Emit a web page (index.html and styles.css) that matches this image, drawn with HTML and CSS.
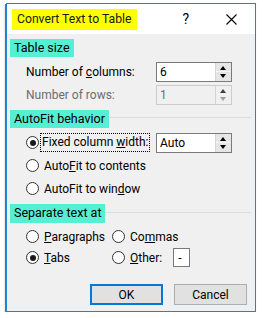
FILE: index.html
```html
<!DOCTYPE html>
<html>
<head>
<meta charset="utf-8">
<link rel="stylesheet" href="styles.css">
</head>
<body>
<div class="window">
  <div class="titlebar">
    <span class="title">Convert Text to Table</span>
    <span class="help">?</span>
    <span class="close"><svg width="11" height="11" viewBox="0 0 11 11"><path d="M0.5 0.5 L10.5 10.5 M10.5 0.5 L0.5 10.5" stroke="#000" stroke-width="1.1" fill="none"/></svg></span>
  </div>
  <div class="body">
    <div class="group-head first"><span class="hl">Table size</span></div>
    <div class="row field">
      <span class="label">Number of <u>c</u>olumns:</span>
      <div class="spin"><span class="val">6</span><span class="arrows"><span class="up"></span><span class="down"></span></span></div>
    </div>
    <div class="row field disabled">
      <span class="label">Number of rows:</span>
      <div class="spin"><span class="val">1</span><span class="arrows"><span class="up"></span><span class="down"></span></span></div>
    </div>

    <div class="group-head"><span class="hl">AutoFit behavior</span><span class="line"></span></div>
    <div class="row field">
      <span class="opt focus"><span class="radio on"></span><span class="focus-box">Fixed column <u>w</u>idth:</span></span>
      <div class="spin"><span class="val">Auto</span><span class="arrows"><span class="up"></span><span class="down"></span></span></div>
    </div>
    <div class="row"><span class="opt"><span class="radio"></span><span>Auto<u>F</u>it to contents</span></span></div>
    <div class="row"><span class="opt"><span class="radio"></span><span>AutoFit to win<u>d</u>ow</span></span></div>

    <div class="group-head sep"><span class="hl">Separate text at</span><span class="line"></span></div>
    <div class="grid2">
      <span class="opt"><span class="radio"></span><span><u>P</u>aragraphs</span></span>
      <span class="opt"><span class="radio"></span><span>Co<u>m</u>mas</span></span>
      <span class="opt"><span class="radio on"></span><span><u>T</u>abs</span></span>
      <span class="opt"><span class="radio"></span><span class="other-label"><u>O</u>ther:</span><span class="small-input">-</span></span>
    </div>

    <div class="buttons">
      <span class="btn default">OK</span>
      <span class="btn">Cancel</span>
    </div>
  </div>
</div>
</body>
</html>
```
FILE: styles.css
```css
html, body { margin: 0; padding: 0; background: #fff; }
body {
  font-family: Roboto, "Noto Sans", "Liberation Sans", sans-serif;
  font-size: 12px;
  color: #000;
}
.window {
  margin: 3px 0 0 6px;
  width: 248px;
  border: 1px solid #1b84d8;
  box-shadow: -1px 1px 0 #6f6f6f, -1px 2px 2px rgba(0,0,0,0.25);
  background: #f0f0f0;
}
.titlebar {
  height: 30px;
  background: #fff;
  display: flex;
  align-items: center;
}
.title {
  margin-left: 5px;
  background: #ffff00;
  padding: 3px 6px 3px 5px;
  line-height: 15px;
  font-size: 12.2px;
  color: #1a1a1a;
}
.help {
  margin-left: auto;
  margin-right: 37px;
  font-size: 14px;
}
.close {
  margin-right: 18px;
  display: flex;
  margin-top: 1px;
}
.body {
  padding: 5px 4px 6px 3px;
}
.group-head {
  display: flex;
  align-items: center;
  height: 18px;
  margin-top: 6px;
}
.group-head.first { margin-top: 0; }
.group-head.sep { margin-top: 6px; height: 19px; }
.hl {
  background: #55f0d4;
  padding: 0 4px;
  line-height: 18px;
  height: 100%;
  white-space: nowrap;
  font-size: 12.5px;
}
.line {
  flex: 1;
  height: 1px;
  background: #dcdcdc;
  margin-top: -3px;
}
.row {
  display: flex;
  align-items: center;
  height: 19px;
  margin-top: 4px;
  padding-left: 16px;
}
.row.field { justify-content: space-between; padding-right: 19px; }
.group-head + .row { margin-top: 5px; }
.disabled .label { color: #6d6d6d; }
.spin {
  width: 74px;
  height: 18px;
  border: 1px solid #7a7a7a;
  background: #fff;
  display: flex;
  align-items: center;
  justify-content: space-between;
}
.disabled .spin { border-color: #cccccc; background: #f0f0f0; color: #6d6d6d; }
.val { padding-left: 3px; }
.arrows {
  display: flex;
  flex-direction: column;
  width: 15px;
  height: 18px;
  border-left: 1px solid #d4d4d4;
}
.arrows span {
  flex: 1;
  background: #e6e6e6;
  position: relative;
}
.arrows .up { border-bottom: 1px solid #f5f5f5; }
.arrows .up::after, .arrows .down::after {
  content: "";
  position: absolute;
  left: 4px;
  border-left: 3.5px solid transparent;
  border-right: 3.5px solid transparent;
}
.arrows .up::after { top: 3px; border-bottom: 4px solid #000; }
.arrows .down::after { top: 2px; border-top: 4px solid #000; }
.disabled .arrows span { background: #f0f0f0; }
.disabled .arrows .up::after { border-bottom-color: #404040; }
.disabled .arrows .down::after { border-top-color: #a0a0a0; }
.opt {
  display: flex;
  align-items: center;
  gap: 5px;
}
.radio {
  width: 11px;
  height: 11px;
  border: 1px solid #333;
  border-radius: 50%;
  background: #fff;
  position: relative;
  flex: none;
}
.radio.on::after {
  content: "";
  position: absolute;
  left: 2.5px;
  top: 2.5px;
  width: 6px;
  height: 6px;
  border-radius: 50%;
  background: #1a1a1a;
}
.focus-box {
  outline: 1px dotted #000;
  padding: 0 1px 0 1px;
  margin-left: -3px;
  line-height: 17px;
}
.grid2 {
  display: grid;
  grid-template-columns: 86px 1fr;
  grid-auto-rows: 19px;
  row-gap: 2px;
  margin-top: 4px;
  padding-left: 16px;
  align-items: center;
}
.other-label { margin-right: 2px; }
.small-input {
  width: 17px;
  height: 19px;
  border: 1px solid #7a7a7a;
  background: #fff;
  box-sizing: border-box;
  display: flex;
  align-items: center;
  padding-left: 4px;
  margin-left: 4px;
}
.buttons {
  display: flex;
  justify-content: flex-end;
  gap: 11px;
  margin-top: 17px;
  padding-right: 4px;
}
.btn {
  width: 73px;
  height: 21px;
  box-sizing: border-box;
  border: 1px solid #adadad;
  background: #e1e1e1;
  display: flex;
  align-items: center;
  justify-content: center;
}
.btn.default { border: 2px solid #0078d7; }
```
